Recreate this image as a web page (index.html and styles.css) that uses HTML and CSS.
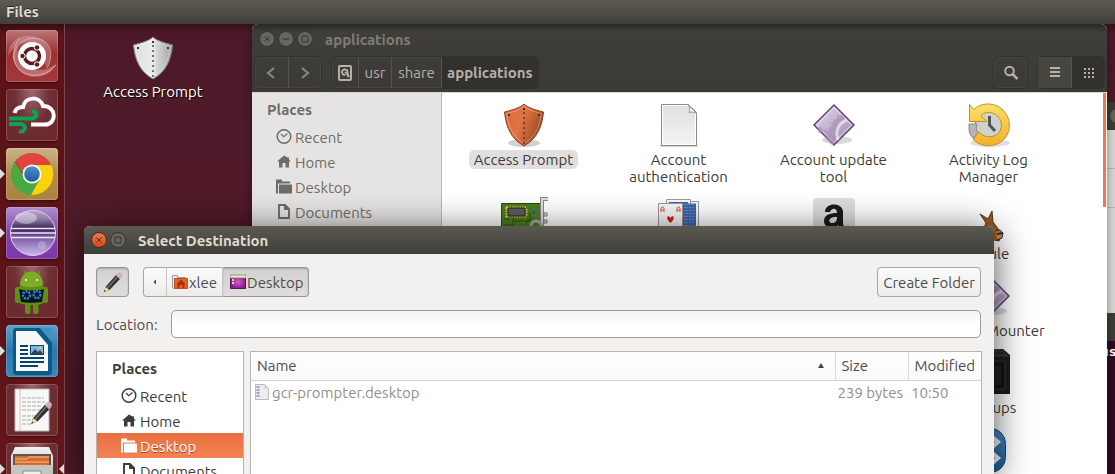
FILE: index.html
```html
<!DOCTYPE html>
<html lang="en">
<head>
<meta charset="utf-8">
<title>Files</title>
<link rel="stylesheet" href="styles.css">
</head>
<body>
<svg class="defs" aria-hidden="true">
  <defs>
    <linearGradient id="steel" x1="0" y1="0" x2="1" y2="0"><stop offset="0" stop-color="#dcdedb"/><stop offset=".5" stop-color="#eceeeb"/><stop offset=".6" stop-color="#d3d5d1"/><stop offset="1" stop-color="#a0a49f"/></linearGradient>
    <linearGradient id="copper" x1="0" y1="0" x2="1" y2=".4"><stop offset="0" stop-color="#d8673a"/><stop offset=".5" stop-color="#e07443"/><stop offset="1" stop-color="#a44c27"/></linearGradient>
    <linearGradient id="lilac" x1="0" y1="0" x2="1" y2="1"><stop offset="0" stop-color="#e3dbe8"/><stop offset="1" stop-color="#9c86b0"/></linearGradient>
    <linearGradient id="gold" x1="0" y1="0" x2="0" y2="1"><stop offset="0" stop-color="#fbe06a"/><stop offset="1" stop-color="#f2b02c"/></linearGradient>
    <linearGradient id="blue" x1="0" y1="0" x2="0" y2="1"><stop offset="0" stop-color="#4a90cc"/><stop offset="1" stop-color="#1f5c98"/></linearGradient>
    <linearGradient id="paper" x1="0" y1="0" x2="0" y2="1"><stop offset="0" stop-color="#dfe1de"/><stop offset="1" stop-color="#f4f4f3"/></linearGradient>
    <linearGradient id="orb" x1="0" y1="0" x2="0" y2="1"><stop offset="0" stop-color="#b9a6cc"/><stop offset=".2" stop-color="#8b78a4"/><stop offset=".4" stop-color="#382452"/><stop offset=".6" stop-color="#7a5ca8"/><stop offset="1" stop-color="#cdb9ea"/></linearGradient>
    <linearGradient id="metal" x1="0" y1="0" x2="0" y2="1"><stop offset="0" stop-color="#f2f2f2"/><stop offset="1" stop-color="#9a9a98"/></linearGradient>
    <radialGradient id="violet"><stop offset="0" stop-color="#cf62c8"/><stop offset="1" stop-color="#8d1b8b"/></radialGradient>

    <symbol id="clock" viewBox="0 0 16 16"><circle cx="8" cy="7.500" r="6.800" fill="none" stroke="currentColor" stroke-width="1.500"/><path d="M5 5 7.700 7.700 11.500 4.500" fill="none" stroke="currentColor" stroke-width="1.200"/></symbol>
    <symbol id="house" viewBox="0 0 16 16"><path d="M8 1.500 1 7.500h2v6h3.500V9h3v4.500H13v-6h2l-2-1.700V3.500l-2-.3Z" fill="currentColor"/></symbol>
    <symbol id="folder" viewBox="0 0 16 16"><path d="M0 .5h6v2h8v2H2v10H0ZM3 5.500h13v9H3Z" fill="currentColor"/></symbol>
    <symbol id="doc" viewBox="0 0 16 16"><path d="M3 1h6l4 4v9H3ZM9 1v4h4" fill="none" stroke="currentColor" stroke-width="1.900"/></symbol>
    <symbol id="shield" viewBox="0 0 48 48"><path d="M24 3c4 4 12 6 19.500 8C42 25 38 37 24 45 10 37 6 25 4.500 11 12 9 20 7 24 3Z"/><path d="M24 5.500c5 3.700 11 5.500 17.300 7.200C39.500 25 36 35 24 42.500 12 35 8.500 25 6.700 12.700 13 11 19 9.200 24 5.500Z" fill="none" stroke="#fff" stroke-opacity=".3"/><path d="M24 11v32" fill="none" stroke="#333" stroke-width="1.300" stroke-dasharray="2 3"/><path d="M23 8h2M8 14h2M38 14h2" stroke="#333" stroke-width="2"/></symbol>
    <symbol id="pencil" viewBox="0 0 24 24"><path d="m3 22 1.500-5L15 5l4 4L8.500 20Z" fill="#333"/><path d="m6 18.500 10.500-12" stroke="#777" stroke-width="1.200"/><path d="m3 22 1.500-5 4 3Z" fill="#f0e09a"/><path d="m3 22 .600-2 1.300 1.100Z" fill="#222"/><path d="m15 5 1.500-1.700 4 4L19 9Z" fill="#bbb"/><path d="M16.500 3.300C18.500 1 23 4 20.500 7.300Z" fill="#e5a0ce"/></symbol>
    <symbol id="gearbox" viewBox="0 0 48 48"><ellipse cx="27" cy="39" rx="15" ry="4" fill="#000" opacity=".15"/><path d="M24 4 44 24 24 44 4 24Z" fill="url(#lilac)" stroke="#65477a" stroke-width="1.500"/><path d="M24 6.500 41.500 24 24 41.500 6.500 24Z" fill="none" stroke="#fff" stroke-opacity=".7"/><path d="m9 25 2 1 2 3 2-1 1 2 3-1 0-3 3-1-1-3 3-1 0-3 3 0 0-4 3 1 1-2 6 7-5 1-4 6 1 5-4 9-3 3-7-7 2-3-4-4-5 2Z" fill="#a893b8" opacity=".75"/><path d="M37 19c-9 3-12 11-9 20" fill="none" stroke="#f5f0f8" stroke-width="3" opacity=".7"/></symbol>
  </defs>
</svg>

<header class="menubar">Files</header>
<div class="workspace">
  <nav class="launcher" aria-label="Launcher">
    <button class="tile dash" aria-label="Search"><svg viewBox="0 0 52 52"><path d="M2 26C2 8 20 2 33 8c12 5 15 20 7 30-2-8-4-16-10-22-8-6-20-4-28 10Z" fill="#fff" opacity=".22"/><path d="M50 34c-6 14-24 16-35 8C6 35 5 22 12 14c-2 10 2 20 10 24 9 4 20 2 28-4Z" fill="#fff" opacity=".28"/><path d="M8 30C6 14 22 4 36 10c10 5 11 18 5 28M14 8C4 20 6 36 18 43c10 5 24 2 32-8" fill="none" stroke="#f0cccc" stroke-opacity=".6"/><circle cx="26" cy="26" r="14" fill="#fff"/><circle cx="26" cy="26" r="7.500" fill="none" stroke="#5c1a1c" stroke-width="3.400"/><g fill="#5c1a1c" stroke="#fff"><circle cx="16.500" cy="26" r="2.700"/><circle cx="31" cy="17.500" r="2.700"/><circle cx="31" cy="34.500" r="2.700"/></g></svg></button>
    <button class="tile wine" aria-label="Weather"><svg viewBox="0 0 52 52" fill="none" stroke-width="4"><path d="M8.500 24c1-4 4-6 8.500-6 2-11 17-11 20-1 14 0 14 18.500 2 18.500H25" stroke="#fff"/><path d="M3 29.500h22c8 0 6-8 1-7M3 35h11c8 0 5 10-1 7" stroke="#0ba450"/></svg></button>
    <button class="tile sand running" aria-label="Chrome"><svg viewBox="0 0 52 52"><circle cx="26" cy="26" r="21" fill="#49a942"/><path d="M26 26 8 15.200A21 21 0 0 1 45.500 18Z" fill="#e04340"/><path d="M26 17h19.200A21 21 0 0 1 25 47l9-16Z" fill="#fcd209"/><path d="M26 26 17 31 8 15.200A21 21 0 0 1 10 13l8 13Z" fill="#e02c2c"/><path d="M5.200 23A21 21 0 0 1 9 14l10 17 8 3-2 13A21 21 0 0 1 5.200 23Z" fill="#49a942"/><circle cx="26" cy="26" r="9.500" fill="#fff"/><circle cx="26" cy="26" r="7.800" fill="url(#blue)"/></svg></button>
    <button class="tile purple running" aria-label="Eclipse"><svg viewBox="0 0 52 52"><circle cx="27" cy="26" r="22.500" fill="url(#orb)" stroke="#ddd0ee"/><path d="M5 21.500h44M4.500 26h45M5 30.500h44" stroke="#efe6f8" stroke-width="1.500"/><ellipse cx="20" cy="11" rx="11" ry="6" fill="#fff" opacity=".4"/><circle cx="36" cy="38" r="4" fill="#fff" opacity=".2"/></svg></button>
    <button class="tile wine" aria-label="Android Studio"><svg viewBox="0 0 52 52"><path d="m18 5 3 6M34 5l-3 6" stroke="#78a51e"/><g fill="#5f8f16"><rect x="9" y="21" width="5" height="16" rx="2"/><rect x="37" y="21" width="5" height="16" rx="2"/><rect x="19" y="36" width="5.500" height="12" rx="2"/><rect x="27" y="36" width="5.500" height="12" rx="2"/><path d="M13 20h25v16c0 4-25 4-25 0Z"/></g><path d="M14 19C14 1 37 1 37 19c-5 3-18 3-23 0Z" fill="#7fac27"/><circle cx="20" cy="14" r="1" fill="#fff"/><circle cx="31" cy="14" r="1" fill="#fff"/><path d="M13 23c7 2 18 2 25 0l-2 13c-6 1-15 1-21 0Z" fill="#07141f"/><g fill="none" stroke="#238bd2" stroke-width="2.500" stroke-dasharray="2 1"><circle cx="20.500" cy="29" r="3.500"/><circle cx="31" cy="28.500" r="3.500"/></g></svg></button>
    <button class="tile azure running" aria-label="Writer"><svg viewBox="0 0 52 52"><path d="M10 3h24L46 17v30q0 3-3 3H10q-3 0-3-3V6q0-3 3-3Z" fill="#0b5b88"/><path d="M34 3h12v14Z" fill="#3f93c1"/><path d="M10 6h20l12 14v26H10Z" fill="#f7f8f8"/><path d="M14 21h8M14 25h8M14 29h8M14 33h24M14 37h24M14 41h18" stroke="#07446a" stroke-width="2"/><rect x="24.500" y="20.500" width="13" height="9" fill="#7bb9e1" stroke="#07446a"/><path d="m25 29 4-5 3 3 2-2 3 4Z" fill="#30434a"/><circle cx="34" cy="23" r="1.300" fill="#f5c344"/></svg></button>
    <button class="tile wine" aria-label="Text Editor"><svg viewBox="0 0 52 52"><path d="M9 5h34v42H9Z" fill="#f8f8f6" stroke="#bcb7b7"/><path d="M14 5v42" stroke="#e7b8b8"/><path d="M16 14h22M16 18h23M16 22h20M16 26h19M16 32h16M16 36h13M16 40h10" stroke="#aaa" stroke-dasharray="4 1"/><use href="#pencil" x="22" y="15" width="27" height="27"/></svg></button>
    <button class="tile wine running active" aria-label="Files"><svg viewBox="0 0 52 52"><path d="M9 4h34l4 9v39H5V13Z" fill="url(#metal)"/><path d="M7 11h38v16H7Z" fill="#5b5652"/><path d="M9 13h34v9H9Z" fill="#d86a2e"/><path d="M9 16h12l2-2h20M9 19h34" stroke="#f7c18e" fill="none"/><path d="M6 22h40v30H6Z" fill="#c4c4c2"/><path d="M17 28h18v5H17Z" fill="#eee" stroke="#888"/></svg></button>
  </nav>

  <main class="desktop">
    <figure class="shortcut"><svg class="icon48" viewBox="0 0 48 48"><use href="#shield" width="48" height="48" fill="url(#steel)" stroke="#8c8f8a"/></svg><figcaption>Access Prompt</figcaption></figure>

    <section class="window back-panel" aria-label="Settings"><div class="bar"><i></i></div><div class="line"></div><div class="line"></div></section>
    <section class="window terminal" aria-label="Terminal"><div class="bar"></div><p>us</p></section>

    <section class="window files" aria-label="applications">
      <div class="chrome">
        <div class="title">
          <button class="dot" aria-label="Close"><svg viewBox="0 0 16 16"><path d="m5.500 5.500 5 5m0-5-5 5"/></svg></button>
          <button class="dot" aria-label="Minimize"><svg viewBox="0 0 16 16"><path d="M4.500 8h7"/></svg></button>
          <button class="dot" aria-label="Maximize"><svg viewBox="0 0 16 16"><path d="M5 5h6v6H5Z"/></svg></button>
          <h1>applications</h1>
        </div>
        <div class="tools">
          <div class="group nav">
            <button aria-label="Back"><svg class="icon16" viewBox="0 0 16 16"><path d="M10 3 4 8l6 5"/></svg></button>
            <button aria-label="Forward"><svg class="icon16" viewBox="0 0 16 16"><path d="m5 3 6 5-6 5"/></svg></button>
          </div>
          <div class="group path">
            <button class="disk" aria-label="Computer"><svg class="icon16" viewBox="0 0 16 16"><rect x="2" y="1" width="12" height="14" rx="1" stroke-width="2"/><path d="M8 10a2.800 2.800 0 1 1 2.500-2l1 4" stroke-width="2"/><path d="m8 7 4 5"/></svg></button>
            <button>usr</button><button class="wide">share</button><button class="on current">applications</button>
          </div>
          <div class="group search"><button aria-label="Search"><svg class="icon16" viewBox="0 0 16 16"><circle cx="6.500" cy="6" r="4.300" stroke-width="2"/><path d="m9.500 9 5 5" stroke-width="2.500"/></svg></button></div>
          <div class="group views">
            <button class="raised" aria-label="List view"><svg class="icon16" viewBox="0 0 16 16"><path d="M3 3h10M3 7h10M3 11h10" stroke-width="2"/></svg></button>
            <button class="on" aria-label="Icon view"><svg class="icon16" viewBox="0 0 16 16"><path d="M4 4h10M4 8h10M4 12h10" stroke-width="2" stroke-dasharray="2 2"/></svg></button>
          </div>
        </div>
      </div>
      <div class="panes">
        <aside class="places">
          <h2>Places</h2>
          <a href="#recent"><svg class="icon16"><use href="#clock"/></svg>Recent</a>
          <a href="#home"><svg class="icon16"><use href="#house"/></svg>Home</a>
          <a href="#desk"><svg class="icon16"><use href="#folder"/></svg>Desktop</a>
          <a href="#docs"><svg class="icon16"><use href="#doc"/></svg>Documents</a>
        </aside>
        <div class="grid">
          <figure><svg class="icon48" viewBox="0 0 48 48"><ellipse cx="24" cy="42" rx="16" ry="4" fill="#000" opacity=".18"/><use href="#shield" width="48" height="48" fill="url(#copper)" stroke="#8c3f1c"/></svg><figcaption class="picked">Access Prompt</figcaption></figure>
          <figure><svg class="icon48" viewBox="0 0 48 48"><path d="M5 44h38v2H5Z" fill="#000" opacity=".15"/><path d="M6.500 3.500h27l8 8v33h-35Z" fill="url(#paper)" stroke="#888a85"/><path d="M7.500 4.500h25l8 8v31h-33Z" fill="none" stroke="#fff"/><path d="M33 3.500c2 3 2 6 1 8 3-1 6 0 7.500 1Z" fill="#fafafa" stroke="#9a9c98"/></svg><figcaption>Account<br>authentication</figcaption></figure>
          <figure><svg class="icon48"><use href="#gearbox"/></svg><figcaption>Account update<br>tool</figcaption></figure>
          <figure><svg class="icon48" viewBox="0 0 48 48"><ellipse cx="25" cy="42" rx="20" ry="4" fill="#000" opacity=".12"/><circle cx="24" cy="24" r="14" fill="#cfd0d0" stroke="#888"/><path d="M4 23v5c0 4 2 7 4 9l5-5c-2-3-2-6-1-9Z" fill="#b5b6b6" stroke="#888"/><path d="m4.500 3.500 4.500 5C15 2 27 1 35 6.500 44 13 47 25 42 34c-6 11-20 14-31 7l-3-3 6-7c6 7 17 6 21-1 5-10-4-21-15-18-2 .5-3 1-4 3l6 5.500H4.500Z" fill="url(#gold)" stroke="#c88f17"/><path d="M24.500 15v9l5.500 6" fill="none" stroke="#555" stroke-width="3"/></svg><figcaption>Activity Log<br>Manager</figcaption></figure>
          <figure><svg class="icon48" viewBox="0 0 48 48"><path d="M1.500 8.500h40V40h-40Z" fill="#4c7d22" stroke="#254a0b"/><path d="M4 30h9v-8M4 24h6M12 26h18v-8M26 28l8-7v-8M18 32h14" fill="none" stroke="#2d570f"/><path d="M7 13h19v8H7Z" fill="#555" stroke="#e1d53b" stroke-width="3" stroke-dasharray="1.500 1"/><path d="M8 13h17v8H8Z" fill="#5c5c5c" stroke="#222"/><path d="M33 13h3v3h-3Zm0 6h3v3h-3Zm0 6h3v3h-3Z" fill="#3473bf"/><path d="M48 4h-6v36" fill="none" stroke="#888" stroke-width="4"/><path d="M48 4h-6v36" fill="none" stroke="#ddd" stroke-width="2"/><circle cx="36" cy="31" r="5" fill="none" stroke="#aaa" stroke-width="3"/><path d="M44 18h3v3h-3ZM44 25h3v3h-3Z" fill="#eee" stroke="#777"/></svg></figure>
          <figure><svg class="icon48" viewBox="0 0 48 48"><g stroke="#999" fill="#f8f8f8"><path d="M28 6.500h15.500V40H28Z"/><path d="M11.500 4.500h24V40h-24Z"/></g><path d="M30 8.500h11V40H30ZM14 7h19v33H14Z" fill="#3e65aa"/><path d="M32 9v31M35 9v31M38 9v31M15 9v31M18 9v31M21 9v31M24 9v31M27 9v31M30 9v31" stroke="#8fa8d3" stroke-dasharray="1 2"/><path d="M3.500 8.500h24V42h-24Z" fill="#f6f6f4" stroke="#999"/><path d="M6 17v-4l1.500-1.500L9 13v4M6 15h3M22 17v-4l1.500-1.500L25 13v4M22 15h3" fill="none" stroke="#e44"/><path d="M15.500 28c-7-6-1-9 0-4.500 1-4.500 7-1.500 0 4.500Z" fill="#d3221f"/></svg></figure>
          <figure><svg class="icon48" viewBox="0 0 48 48"><rect x="3" y="3" width="42" height="42" rx="4" fill="#dcdcdb"/><path d="M15 17c0-10 18-10 18 0v11c0 2 1 3 2 4h-6l-1-2c-5 5-14 3-14-4 0-6 6-8 13-8 0-6-6-5-7-1Zm12 5c-10-1-9 7-4 6 3 0 4-3 4-6Z" fill="#1a1a1a"/><path d="M10 32c11 9 21 8 29-1" fill="none" stroke="#f19a1f" stroke-width="3"/></svg></figure>
          <figure><svg class="icon48" viewBox="0 0 48 48"><path d="M21 28 15 19l8 5 4-8 1 11 6 8 3 4-3 7-10-2-6-9Z" fill="#9a5a22" stroke="#5c3513"/><path d="m31 36 4-1 3 3-1 5-5 2" fill="#d98a35" stroke="#27303e"/><path d="m32 39 6-1" stroke="#27303e" stroke-width="2"/></svg><figcaption>aMule</figcaption></figure>
          <figure class="last"><svg class="icon48"><use href="#gearbox"/></svg><figcaption>Archive Mounter</figcaption></figure>
          <figure class="last"><svg class="icon48" viewBox="0 0 48 48"><path d="m7 1 31-1 7 6v39H3V6Z" fill="#1d1e1c"/><path d="M4 7h40M8 2h30l4 4H6Z" stroke="#3f413e" fill="#292a28"/><path d="M7 12h33v28H7Z" fill="#141513" stroke="#3a3b38"/><path d="M12 17h24v19H12Z" fill="#20211e"/></svg><figcaption>Backups</figcaption></figure>
          <figure class="last"><svg class="icon48" viewBox="0 0 48 48"><rect x="7.500" y="2.500" width="33" height="44" rx="15" fill="url(#blue)" stroke="#174a7c"/><path d="m15 16 18 16-9 8V8l9 8-18 16" fill="none" stroke="#fff" stroke-width="4"/></svg></figure>
        </div>
        <div class="scroll"></div>
      </div>
    </section>

    <section class="window dialog" role="dialog" aria-label="Select Destination">
      <div class="title">
        <button class="dot red" aria-label="Close"><svg viewBox="0 0 16 16"><path d="m5.500 5.500 5 5m0-5-5 5"/></svg></button>
        <button class="dot" aria-label="Maximize"><svg viewBox="0 0 16 16"><path d="M5 5h6v6H5Z"/></svg></button>
        <h1>Select Destination</h1>
      </div>
      <div class="content">
        <div class="row">
          <button class="light pressed edit" aria-label="Type a file name"><svg class="icon24"><use href="#pencil"/></svg></button>
          <div class="crumbs">
            <button class="light back" aria-label="Back"><svg class="icon16" viewBox="0 0 16 16"><path d="M9 5.500 6.500 8 9 10.500Z" fill="#444"/></svg></button>
            <button class="light"><svg class="icon16" viewBox="0 0 16 16"><path d="M.5 1.500h5v2h8V14H.5Z" fill="#eee" stroke="#999"/><path d="M2.500 4.500h13v10h-13Z" fill="#e2622f" stroke="#c04e22"/><path d="m4.500 10 4.500-4.500 4.500 4.500h-1v4h-2v-3h-3v3h-2v-4Z" fill="#a8320e"/></svg>xlee</button>
            <button class="light pressed"><svg class="icon16" viewBox="0 0 16 16"><path d="M.5 1.500h15v13H.5Z" fill="url(#violet)" stroke="#5e1060"/><path d="M0 1h16v3H0Z" fill="#e8e6cf" stroke="#8a8768" stroke-width=".8"/><path d="M2 6h2M2 9h2" stroke="#fff" stroke-width="1.500"/></svg>Desktop</button>
          </div>
          <button class="light create">Create Folder</button>
        </div>
        <div class="row location"><label for="location">Location:</label><input id="location" type="text"></div>
        <div class="browser">
          <aside class="places boxed">
            <h2>Places</h2>
            <a href="#recent"><svg class="icon16"><use href="#clock"/></svg>Recent</a>
            <a href="#home"><svg class="icon16"><use href="#house"/></svg>Home</a>
            <a href="#desk" class="selected"><svg class="icon16"><use href="#folder"/></svg>Desktop</a>
            <a href="#docs"><svg class="icon16"><use href="#doc"/></svg>Documents</a>
          </aside>
          <div class="listing boxed">
            <table>
              <thead><tr><th><span class="head">Name<svg class="sort" viewBox="0 0 6 5"><path d="m0 5 3-5 3 5Z" fill="#444"/></svg></span></th><th class="size">Size</th><th class="modified">Modified</th></tr></thead>
              <tbody><tr><td><span class="file"><svg class="icon16" viewBox="0 0 16 16"><path d="M1.500.5h9l4 4v11h-13Z" fill="#eee" stroke="#bbb"/><path d="M10.500.5v4h4Z" fill="#ccc"/><path d="M4 2v12" stroke="#9aa4cc" stroke-width="3" stroke-dasharray="2 1"/></svg>gcr-prompter.desktop</span></td><td class="num">239 bytes</td><td class="time">10:50</td></tr></tbody>
            </table>
          </div>
        </div>
      </div>
    </section>
  </main>
</div>
</body>
</html>
```
FILE: styles.css
```css
* { box-sizing: border-box; }
body { margin: 0; height: 100vh; display: flex; flex-direction: column; overflow: hidden; background: #4d1929; font: 15px/17px Ubuntu, "Noto Sans", sans-serif; color: #3c3b37; }
button, input { font: inherit; color: inherit; margin: 0; }
button { padding: 0; border: 0; background: none; display: flex; align-items: center; justify-content: center; }
h1, h2, p, figure { margin: 0; font-size: inherit; }
a { color: inherit; text-decoration: none; }
svg { display: block; flex: none; }
.defs { position: absolute; width: 0; height: 0; }
.icon16 { width: 16px; height: 16px; }
.icon24 { width: 24px; height: 24px; }
.icon48 { width: 48px; height: 48px; }

.menubar { flex: none; height: 24px; padding: 0 6px; line-height: 24px; font-weight: bold; color: #dfdbd2; background: linear-gradient(#5d5b51, #403f3a); text-shadow: 0 -1px #2c2b28; }
.workspace { flex: 1; min-height: 0; display: flex; }
.launcher { flex: none; width: 65px; padding: 6px; display: flex; flex-direction: column; gap: 7px; overflow: hidden; background: linear-gradient(#3a0c10, #5c1318 10px, #5a1318 60%, #641519); border-right: 1px solid #7a434b; }
.tile { position: relative; flex: none; width: 52px; height: 52px; border-radius: 4px; box-shadow: inset 0 0 0 1px #ffffff2e, 0 1px 2px #0006; }
.tile svg { width: 52px; height: 52px; }
.dash { background: linear-gradient(#bb7679, #9c3033 45%, #a3383b); }
.wine { background: radial-gradient(ellipse at 50% 0, #9d696d, #6e2e33 50%, #6c2a2f 80%); }
.sand { background: linear-gradient(#cbb48a, #b18b47 50%, #ac8440); }
.purple { background: linear-gradient(#b18fcf, #8042aa 50%, #7b3aa8); }
.azure { background: linear-gradient(#5da1c9, #2b79ac 50%, #3c85b5); }
.running::before { content: ""; position: absolute; left: -6px; top: 21px; border: solid transparent; border-width: 5px 0 5px 5px; border-left-color: #dedcdc; }
.active::after { content: ""; position: absolute; right: -6px; top: 21px; border: solid transparent; border-width: 5px 5px 5px 0; border-right-color: #dedcdc; }

.desktop { position: relative; flex: 1; min-width: 0; overflow: hidden; background: linear-gradient(#35101c, #4d1928 10px, #511b29 50%, #4d1928); }
.shortcut { position: absolute; left: 14px; top: 10px; width: 148px; display: flex; flex-direction: column; align-items: center; gap: 1px; color: #fff; text-shadow: 1px 1px 1px #000; }
.window { position: absolute; overflow: hidden; }
.back-panel { right: 0; top: 78px; width: 14px; height: 211px; background: #d9d7d5; }
.back-panel .bar { height: 28px; padding: 7px 0 0 9px; background: #3d3c38; }
.back-panel i { display: block; width: 14px; height: 14px; border-radius: 50%; background: #64635e; }
.back-panel .line { height: 39px; border-bottom: 1px solid #b9b7b5; }
.terminal { right: 0; top: 289px; bottom: 0; width: 14px; background: #300a24; color: #fff; font: bold 13px/17px "DejaVu Sans Mono", monospace; }
.terminal .bar { height: 28px; background: #3d3c38; }
.terminal p { padding: 2px 0; }

.title { display: flex; align-items: center; height: 28px; gap: 3px; padding-left: 7px; }
.title h1 { margin-left: 9px; padding-top: 1px; white-space: nowrap; }
.dot { width: 16px; height: 16px; border-radius: 50%; background: #66655f; border: 1px solid #34332f; }
.dot svg { width: 16px; height: 16px; fill: none; stroke: #34332f; stroke-width: 1; }
.dot.red { background: linear-gradient(#f2744c, #dd4814); }

.files { left: 187px; right: 8px; top: 0; bottom: 0; display: flex; flex-direction: column; background: #fff; border-radius: 6px 6px 0 0; box-shadow: 0 2px 8px #0006; }
.chrome { background: linear-gradient(#282724, #3f3e3a 8px, #3b3a36); border-bottom: 1px solid #d8d5ce; color: #b4b1a6; }
.files .title { color: #7f7d73; height: 29px; }
.tools { display: flex; padding: 3px 2px; height: 39px; }
.group { display: flex; height: 33px; border: 1px solid #32312e; border-radius: 5px; box-shadow: 0 0 0 1px #45443f inset; }
.group button { min-width: 33px; padding: 0 5px; }
.group button + button { border-left: 1px solid #55544e; }
.group svg { fill: none; stroke: #b4b1a6; stroke-width: 2; }
.nav { width: 68px; }
.nav svg { stroke: #8b897f; }
.group button.disk { min-width: 26px; padding: 0 5px; }
.path { margin-left: 9px; }
.group button.wide { min-width: 50px; padding: 0; }
.on { background: #32312e; border-radius: 0 4px 4px 0; }
.current { font-weight: bold; }
.search { margin-left: auto; margin-right: 9px; }
.raised { background: #46453f; }
.panes { flex: 1; min-height: 0; display: flex; }
.places h2 { height: 31px; line-height: 33px; padding-left: 15px; }
.places a { display: flex; align-items: center; gap: 3px; height: 25px; padding: 1px 0 0 24px; }
.files .places { flex: none; width: 190px; background: #e6e4e2; border-right: 1px solid #bab8b5; color: #6d6c69; }
.grid { flex: 1; display: grid; grid-template-columns: repeat(4, 155px); grid-auto-rows: max-content; align-content: start; gap: 10px 0; padding: 8px 0 0 4px; overflow: hidden; }
.grid figure { display: flex; flex-direction: column; align-items: center; gap: 2px; text-align: center; white-space: nowrap; }
.grid .last { grid-column: 4; }
.picked { background: #e0dfdd; padding: 0 4px; border-radius: 4px; outline: 1px solid #e0dfdd; }
.scroll { flex: none; width: 3px; margin-right: 1px; height: 114px; background: #f07746; }

.dialog { left: 19px; right: 121px; top: 202px; bottom: 0; display: flex; flex-direction: column; background: #f2f1f0; border-radius: 6px 6px 0 0; box-shadow: 0 6px 36px #000000b0; color: #4c4c4c; }
.dialog .title { flex: none; background: linear-gradient(#5b594f, #3e3d39); color: #dfdbd2; }
.content { flex: 1; min-height: 0; display: flex; flex-direction: column; gap: 13px; padding: 13px 12px 0; }
.row { display: flex; align-items: center; }
.light { height: 30px; border: 1px solid #a9a7a4; border-radius: 4px; background: linear-gradient(#fbfbfa, #ececea); padding: 0 5px; white-space: nowrap; }
.pressed { background: linear-gradient(#d3d2d0, #dedddb); border-color: #999794; box-shadow: inset 0 1px 2px #0003; }
.edit { width: 33px; }
.edit, .crumbs { margin-right: 14px; }
.crumbs { display: flex; }
.crumbs .light { border-radius: 0; gap: 1px; border-right-width: 0; border-left-color: #c9c7c4; }
.crumbs .light:first-child { border-radius: 4px 0 0 4px; border-left-color: #a9a7a4; width: 23px; }
.crumbs .light:last-child { border-radius: 0 4px 4px 0; border-right-width: 1px; padding: 0 5px 0 7px; }
.create { margin-left: auto; margin-right: 1px; }
.location { gap: 13px; }
.location input { flex: 1; min-width: 0; height: 28px; margin-right: 1px; padding: 0 6px; border: 1px solid #9d9b98; border-radius: 5px; background: linear-gradient(#f3f3f2, #fff 50%); }
.browser { flex: 1; min-height: 0; display: flex; gap: 6px; }
.boxed { background: #fff; border: 1px solid #b7b3ad; border-bottom: 0; overflow: hidden; }
.dialog .places { flex: none; width: 148px; color: #3c3c3c; }
.dialog .selected { background: linear-gradient(#e96f3f, #f58355); color: #fff; text-shadow: 0 1px #a34a25; }
.listing { flex: 1; }
table { width: 100%; border-collapse: collapse; table-layout: fixed; }
th { height: 28px; padding: 0 6px; font-weight: normal; text-align: left; background: linear-gradient(#fff, #f9f9f9); border-bottom: 1px solid #d5d3d0; }
th + th { border-left: 1px solid #dcdad8; }
.size, .modified { width: 73px; }
.head { display: flex; align-items: center; justify-content: space-between; }
.sort { width: 6px; height: 5px; margin-right: 5px; }
td { height: 24px; padding: 0 3px; color: #918f8c; white-space: nowrap; }
.file { display: flex; align-items: center; gap: 2px; }
td.num { text-align: right; padding: 0 5px 0 0; }
```
